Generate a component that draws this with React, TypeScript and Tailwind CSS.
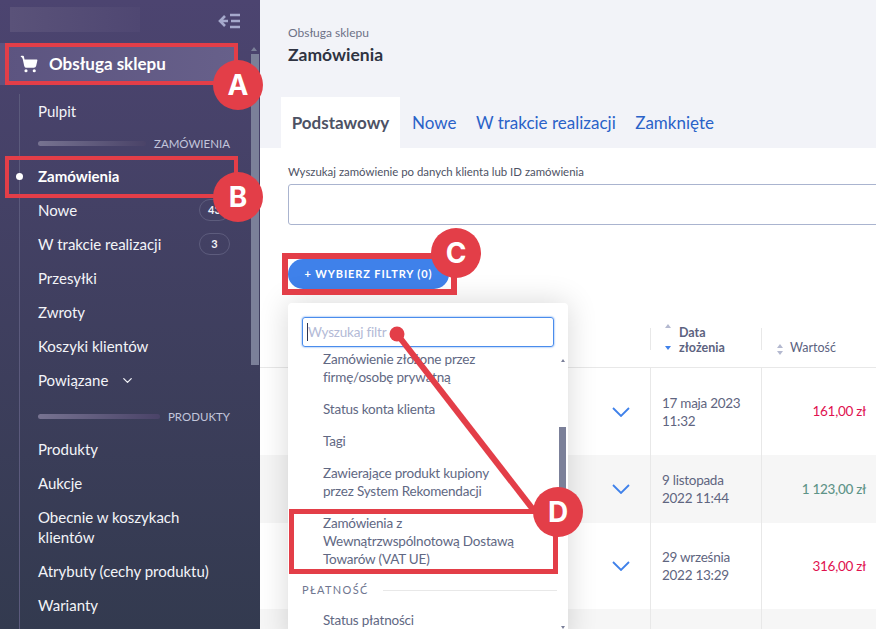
import { ChevronDown, ShoppingCart } from "lucide-react";

const topLinks = [
  { label: "Nowe", badge: "43" },
  { label: "W trakcie realizacji", badge: "3" },
  { label: "Przesyłki" },
  { label: "Zwroty" },
  { label: "Koszyki klientów" },
];

const productLinks = ["Produkty", "Aukcje", "Obecnie w koszykach klientów", "Atrybuty (cechy produktu)", "Warianty"];

const rows = [
  { date: "17 maja 2023", time: "11:32", value: "161,00 zł", paid: false, height: "h-[87px]", bg: "bg-white" },
  { date: "9 listopada", time: "2022 11:44", value: "1 123,00 zł", paid: true, height: "h-[68px]", bg: "bg-[#f6f6f6]" },
  { date: "29 września", time: "2022 13:29", value: "316,00 zł", paid: false, height: "h-[86px]", bg: "bg-white" },
  { date: "", time: "", value: "", paid: false, height: "h-[40px]", bg: "bg-[#f6f6f6]" },
];

function SectionLabel({ children }: { children: string }) {
  return (
    <div className="flex h-[31px] items-center gap-2 pl-[38px] pr-[30px]">
      <div className="h-[5px] flex-1 rounded-full bg-gradient-to-r from-[#777391] to-[#4a4368]" />
      <span className="text-[11.5px] leading-none text-[#c3c6dc]">{children}</span>
    </div>
  );
}

function NavLink({ label, badge }: { label: string; badge?: string }) {
  return (
    <div className="flex min-h-[34px] items-center justify-between pl-[38px] pr-[30px] py-[7px] text-[15px] leading-[20px] text-[#f3f4f8]">
      <span>{label}</span>
      {badge && (
        <span className="my-[-1px] flex h-[22px] w-[31px] items-center justify-center rounded-full border border-[#5d5c7d] text-[11px] font-bold">
          {badge}
        </span>
      )}
    </div>
  );
}

function Sidebar() {
  return (
    <aside className="relative h-full w-[260px] shrink-0 bg-gradient-to-b from-[#4c4470] to-[#333a4f]">
      <div className="flex h-[43px] items-start justify-between pl-[10px] pr-[20px] pt-[7px]">
        <div className="h-[25px] w-[130px] bg-gradient-to-r from-[#5a5279] to-[#4f4772]" />
        <svg width="22" height="18" viewBox="0 0 22 18" className="mt-[6px] text-[#a6a9cc]" fill="none" stroke="currentColor" strokeWidth="2.6">
          <path d="M7 3 2 8l5 5M2 8h8" />
          <path d="M12 2h10M13 8h9M12 14h10" />
        </svg>
      </div>
      <div className="flex h-[42px] w-[238px] items-center gap-[11px] bg-gradient-to-r from-[#5c5480] to-[#67608a] pl-[20px] text-[17px] font-bold text-white">
        <ShoppingCart size={18} fill="currentColor" strokeWidth={2.2} />
        <span>Obsługa sklepu</span>
      </div>
      <div className="relative pt-[9px]">
        <div className="absolute bottom-[-400px] left-[19px] top-[9px] w-px bg-[#5b5a7c]" />
        <NavLink label="Pulpit" />
        <SectionLabel>ZAMÓWIENIA</SectionLabel>
        <div className="relative flex h-[34px] items-center pl-[38px] text-[15px] font-bold text-white">
          <span className="absolute left-[16px] h-[7px] w-[7px] rounded-full bg-white" />
          Zamówienia
        </div>
        {topLinks.map((link) => (
          <NavLink key={link.label} label={link.label} badge={link.badge} />
        ))}
        <div className="flex h-[34px] items-center gap-[12px] pl-[38px] text-[15px] text-[#f3f4f8]">
          Powiązane
          <ChevronDown size={15} strokeWidth={2} />
        </div>
        <div className="pt-[4px]">
          <SectionLabel>PRODUKTY</SectionLabel>
        </div>
        {productLinks.map((label) => (
          <NavLink key={label} label={label} />
        ))}
      </div>
      <div className="absolute right-[1px] top-[54px] h-[311px] w-[8px] bg-[#7b8099]" />
      <div className="absolute right-[3px] top-[47px] h-0 w-0 border-x-[3px] border-b-[4px] border-x-transparent border-b-[#7b8099]" />
    </aside>
  );
}

function SortArrows() {
  return (
    <span className="flex flex-col gap-[3px]">
      <span className="h-0 w-0 border-x-[3.5px] border-b-[4px] border-x-transparent border-b-[#b4b9d0]" />
      <span className="h-0 w-0 border-x-[3.5px] border-t-[4px] border-x-transparent border-t-[#b4b9d0]" />
    </span>
  );
}

function OrdersTable() {
  return (
    <div className="mt-[30px]">
      <div className="grid h-[49px] grid-cols-[390px_111px_115px] border-b border-[#e8e8e8] text-[12.5px] text-[#5c6280]">
        <div />
        <div className="mt-[9px] flex h-[22px] items-start gap-[8px] border-l border-[#e8e8e8] pl-[14px] leading-[15px] font-bold">
          <span className="mt-[-4px] flex h-[26px] flex-col justify-between">
            <span className="h-0 w-0 border-x-[3.5px] border-b-[4px] border-x-transparent border-b-[#b4b9d0]" />
            <span className="h-0 w-0 border-x-[3.5px] border-t-[4px] border-x-transparent border-t-[#3f81ea]" />
          </span>
          <span className="mt-[-3px]">
            Data
            <br />
            złożenia
          </span>
        </div>
        <div className="mt-[9px] flex h-[22px] items-end gap-[7px] border-l border-[#e8e8e8] pl-[15px]">
          <span className="translate-y-[5px]">
            <SortArrows />
          </span>
          <span className="translate-y-[8px]">Wartość</span>
        </div>
      </div>
      {rows.map((row, i) => (
        <div key={i} className={`grid grid-cols-[390px_111px_115px] ${row.height} ${row.bg}`}>
          <div className="flex items-center justify-end pr-[20px] text-[#3f81ea]">
            {row.value && (
              <svg width="18" height="10" viewBox="0 0 18 10" fill="none" stroke="currentColor" strokeWidth="1.8">
                <path d="M1 1l8 8 8-8" />
              </svg>
            )}
          </div>
          <div className="flex items-center border-l border-[#e8e8e8] pl-[11px] text-[13.5px] leading-[18px] tracking-[-0.02em] text-[#5f6580]">
            <span>
              {row.date}
              <br />
              {row.time}
            </span>
          </div>
          <div
            className={`flex items-center justify-end border-l border-[#e8e8e8] pr-[10px] text-[13.5px] tracking-[-0.02em] ${
              row.paid ? "font-medium text-[#5f9488]" : "text-[#e0114f]"
            }`}
          >
            {row.value}
          </div>
        </div>
      ))}
    </div>
  );
}

function FilterItem({ lines }: { lines: string[] }) {
  return (
    <div className="pl-[35px] pb-[14px] text-[13.5px] leading-[18px] tracking-[-0.2px] text-[#616883]">
      {lines.map((line) => (
        <div key={line}>{line}</div>
      ))}
    </div>
  );
}

function FilterDropdown() {
  return (
    <div className="absolute left-[288px] top-[303px] h-[340px] w-[280px] overflow-hidden rounded-t-[4px] bg-white shadow-[0_0_30px_rgba(0,0,0,0.16)]">
      <div className="mx-[14px] mt-[14px] flex h-[30px] items-center rounded-[3px] border border-[#4a8cec] pl-[4px] text-[13.5px] tracking-[-0.2px] text-[#b3bad6] shadow-[0_0_2px_#4a8cec]">
        <span className="h-[18px] w-px bg-[#2d3550]" />
        Wyszukaj filtr
      </div>
      <div className="pt-[3px]">
        <FilterItem lines={["Zamówienie złożone przez", "firmę/osobę prywatną"]} />
        <FilterItem lines={["Status konta klienta"]} />
        <FilterItem lines={["Tagi"]} />
        <FilterItem lines={["Zawierające produkt kupiony", "przez System Rekomendacji"]} />
        <FilterItem lines={["Zamówienia z", "Wewnątrzwspólnotową Dostawą", "Towarów (VAT UE)"]} />
        <div className="flex items-center gap-[14px] pl-[14px] pr-[11px] text-[11px] tracking-[0.12em] text-[#6f7690]">
          PŁATNOŚĆ
          <div className="h-px flex-1 bg-[#e8e8e8]" />
        </div>
        <div className="pt-[12px]">
          <FilterItem lines={["Status płatności"]} />
        </div>
      </div>
      <div className="absolute right-[2px] top-[124px] h-[90px] w-[7px] bg-[#7b8099]" />
      <div className="absolute right-[3px] top-[56px] h-0 w-0 border-x-[2.5px] border-b-[3px] border-x-transparent border-b-[#7b8099]" />
      <div className="absolute right-[3px] top-[323px] h-0 w-0 border-x-[2.5px] border-t-[3px] border-x-transparent border-t-[#7b8099]" />
    </div>
  );
}

function Marker({ letter, className }: { letter: string; className: string }) {
  return (
    <div className={`absolute flex h-[50px] w-[50px] items-center justify-center rounded-full bg-[#e33e48] font-['Inter',sans-serif] text-[28px] font-bold text-white ${className}`}>
      {letter}
    </div>
  );
}

function Annotations() {
  return (
    <>
      <div className="absolute left-[5px] top-[43px] h-[42px] w-[233px] border-[4px] border-[#e33e48]" />
      <div className="absolute left-[5px] top-[156px] h-[42px] w-[233px] border-[4px] border-[#e33e48]" />
      <div className="absolute left-[282px] top-[253px] h-[42px] w-[175px] border-[6px] border-[#e33e48]" />
      <div className="absolute left-[289px] top-[509px] h-[65px] w-[269px] border-[5px] border-[#e33e48]" />
      <svg className="absolute left-0 top-0" width="876" height="629" fill="none">
        <path d="M397 334 535 512" stroke="#e33e48" strokeWidth="6" />
        <circle cx="397" cy="334" r="7.5" fill="#e33e48" />
      </svg>
      <Marker letter="A" className="left-[213px] top-[60px]" />
      <Marker letter="B" className="left-[213px] top-[172px]" />
      <Marker letter="C" className="left-[431px] top-[228px]" />
      <Marker letter="D" className="left-[533px] top-[487px]" />
    </>
  );
}

export default function App() {
  return (
    <div className="relative flex h-[629px] w-[876px] overflow-hidden bg-white font-['Lato',sans-serif]">
      <Sidebar />
      <main className="min-w-0 flex-1">
        <div className="flex h-[148px] flex-col bg-[#f2f3f8] pl-[28px]">
          <div className="pt-[25px] text-[12px] leading-[16px] text-[#6d7187]">Obsługa sklepu</div>
          <h1 className="pt-[2px] text-[17.5px] leading-[24px] font-bold text-[#2f3342]">Zamówienia</h1>
          <div className="mt-auto ml-[-7px] flex items-stretch text-[17px]">
            <div className="flex h-[51px] w-[119px] items-center justify-center bg-white font-bold text-[#4d5264]">Podstawowy</div>
            <div className="flex items-center gap-[19.5px] pl-[12px] text-[#2a62c8]">
              <span>Nowe</span>
              <span>W trakcie realizacji</span>
              <span>Zamknięte</span>
            </div>
          </div>
        </div>
        <div className="pl-[28px] pt-[16px]">
          <div className="text-[11.4px] leading-[16px] text-[#4d5264]">Wyszukaj zamówienie po danych klienta lub ID zamówienia</div>
          <div className="mt-[4px] h-[41px] w-[620px] rounded-[3px] border border-[#aab4cf]" />
          <button className="mt-[34px] flex h-[30px] w-[161px] items-center justify-center rounded-full bg-[#3f81ea] text-[11px] font-bold tracking-[0.08em] text-white">
            + WYBIERZ FILTRY (0)
          </button>
        </div>
        <OrdersTable />
      </main>
      <FilterDropdown />
      <Annotations />
    </div>
  );
}
